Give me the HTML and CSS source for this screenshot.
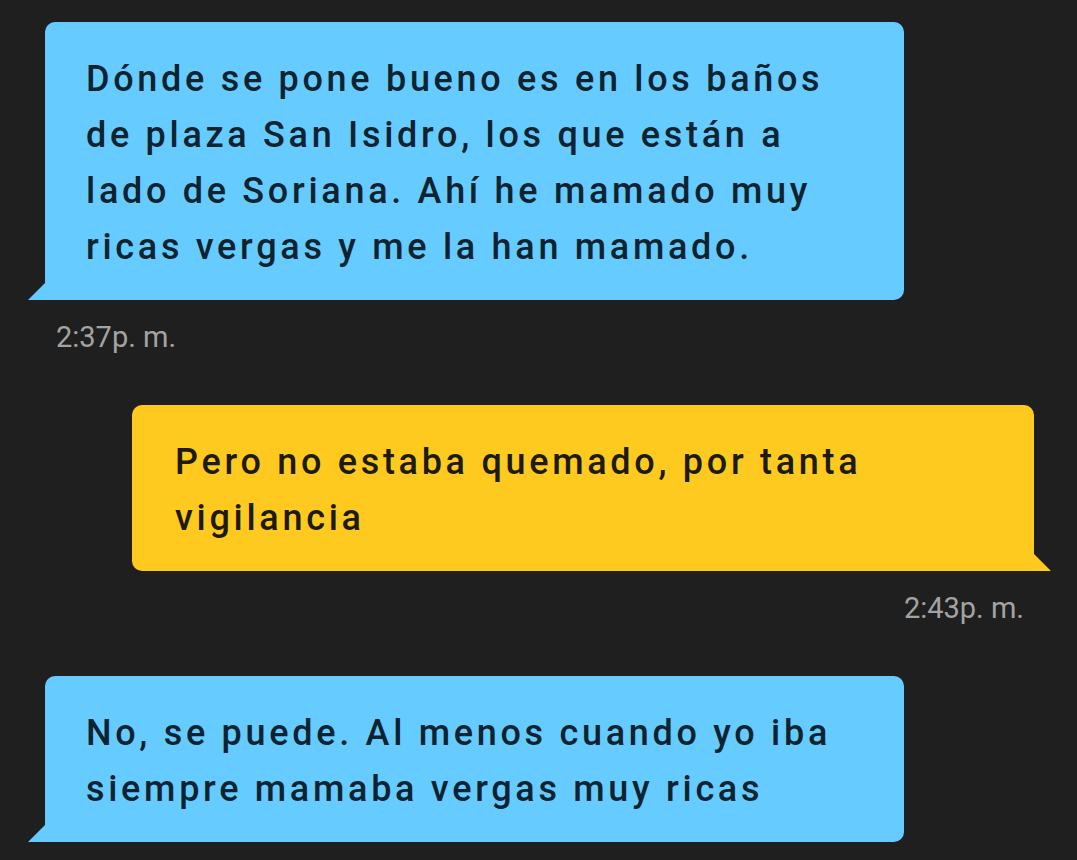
FILE: index.html
```html
<!DOCTYPE html>
<html lang="es">
<head>
<meta charset="utf-8">
<title>Chat</title>
<link rel="stylesheet" href="styles.css">
</head>
<body>
<div class="chat">
  <div class="msg incoming">
    <div class="bubble blue">Dónde se pone bueno es en los baños de plaza San Isidro, los que están a lado de Soriana. Ahí he mamado muy ricas vergas y me la han mamado.</div>
    <div class="time">2:37p. m.</div>
  </div>
  <div class="msg outgoing">
    <div class="bubble yellow">Pero no estaba quemado, por tanta vigilancia</div>
    <div class="time">2:43p. m.</div>
  </div>
  <div class="msg incoming">
    <div class="bubble blue">No, se puede. Al menos cuando yo iba siempre mamaba vergas muy ricas</div>
  </div>
</div>
</body>
</html>
```
FILE: styles.css
```css
html, body {
  margin: 0;
  padding: 0;
  background: #1f1f1f;
}
body {
  font-family: Roboto, "Liberation Sans", sans-serif;
  width: 1077px;
  height: 860px;
  overflow: hidden;
}
.chat {
  display: flex;
  flex-direction: column;
  gap: 50px;
  padding: 22px 43px 0 45px;
}
.msg {
  display: flex;
  flex-direction: column;
}
.incoming {
  align-items: flex-start;
}
.outgoing {
  align-items: flex-end;
}
.bubble {
  position: relative;
  box-sizing: border-box;
  font-size: 36px;
  font-weight: 500;
  letter-spacing: 3.7px;
  line-height: 56px;
  padding: 29px 58px 25px 41px;
}
.blue {
  width: 859px;
  background: #66ccff;
  color: #0e2330;
  border-radius: 10px 10px 10px 0;
}
.yellow {
  width: 902px;
  background: #ffca1f;
  color: #1d1a0e;
  padding-left: 43px;
  padding-right: 104px;
  border-radius: 10px 10px 0 10px;
}
.bubble::after {
  content: "";
  position: absolute;
  bottom: 0;
  width: 18px;
  height: 18px;
}
.blue::after {
  left: -17px;
  background: #66ccff;
  clip-path: polygon(100% 0, 100% 100%, 0 100%);
}
.yellow::after {
  right: -17px;
  background: #ffca1f;
  clip-path: polygon(0 0, 100% 100%, 0 100%);
}
.time {
  font-size: 29px;
  line-height: 36px;
  color: #a3a3a3;
  margin-top: 19px;
}
.incoming .time {
  padding-left: 11px;
}
.outgoing .time {
  padding-right: 10px;
}
```
